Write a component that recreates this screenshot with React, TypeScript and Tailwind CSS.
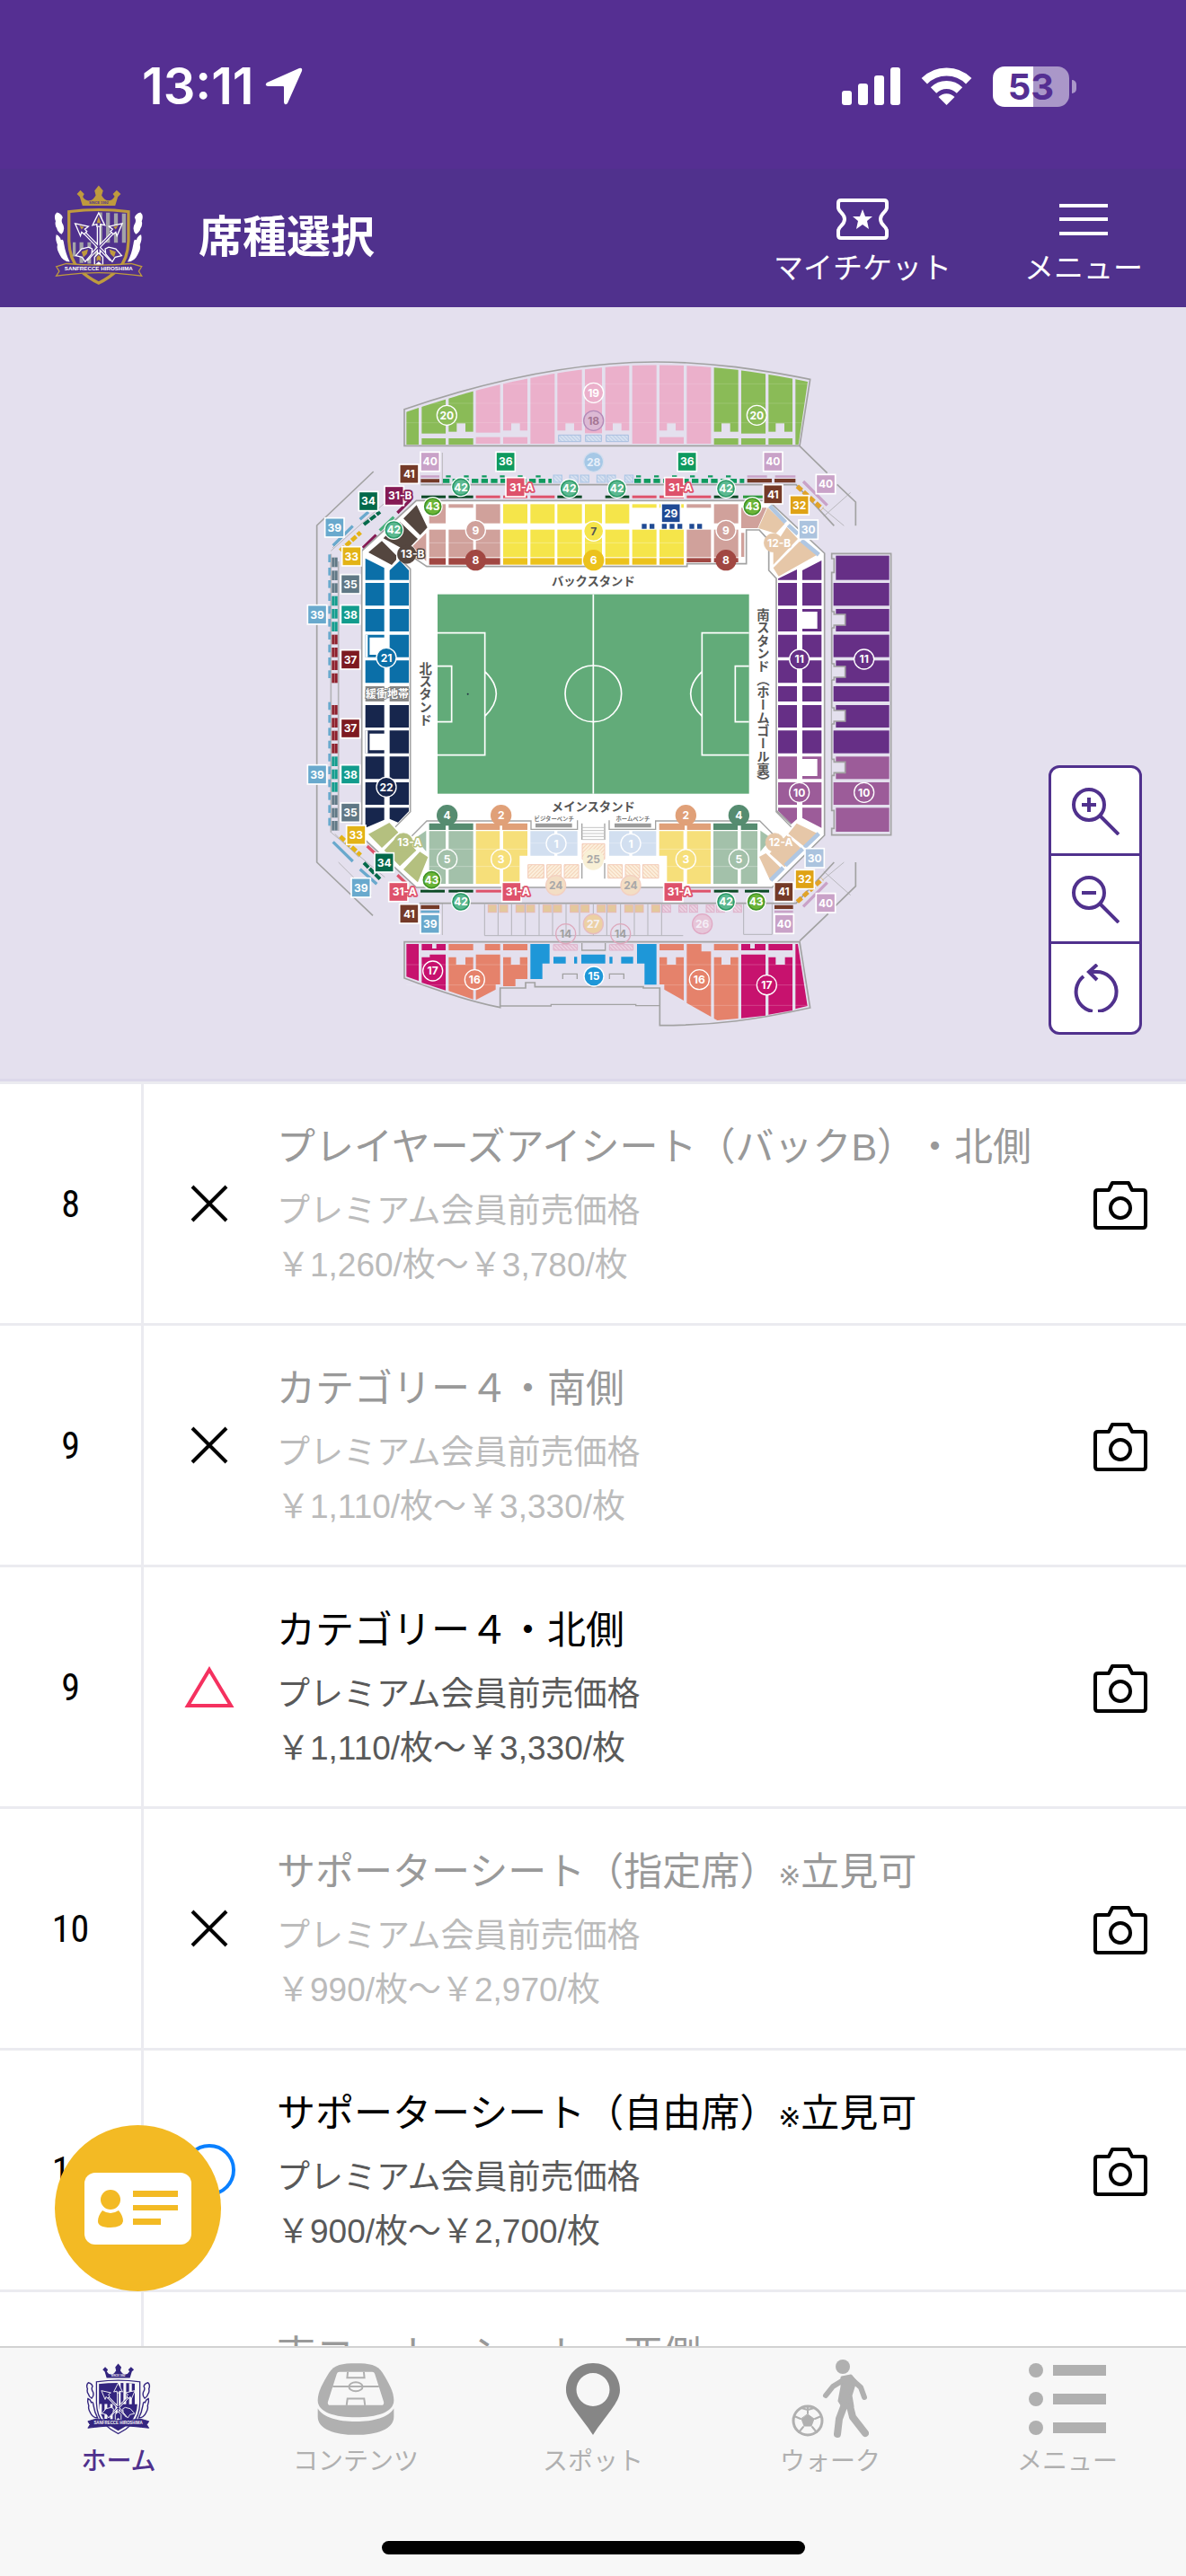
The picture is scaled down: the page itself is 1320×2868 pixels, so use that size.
import type { ReactNode } from 'react';

type Box = [x: number, y: number, w: number, h: number];

type Seat = {
  no: number;
  status: 'none' | 'few' | 'open';
  name: string;
  note?: string;
  price: string;
};

const SEATS: Seat[] = [
  { no: 8, status: 'none', name: 'プレイヤーズアイシート（バックB）・北側', price: '￥1,260/枚～￥3,780/枚' },
  { no: 9, status: 'none', name: 'カテゴリー４・南側', price: '￥1,110/枚～￥3,330/枚' },
  { no: 9, status: 'few', name: 'カテゴリー４・北側', price: '￥1,110/枚～￥3,330/枚' },
  { no: 10, status: 'none', name: 'サポーターシート（指定席）', note: '立見可', price: '￥990/枚～￥2,970/枚' },
  { no: 11, status: 'open', name: 'サポーターシート（自由席）', note: '立見可', price: '￥900/枚～￥2,700/枚' },
  { no: 12, status: 'none', name: '南コーナーシート・西側', price: '￥1,110/枚～￥3,330/枚' },
];

/* ---------- stadium map data ---------- */

const GREEN = '#8abb57';
const PINK = '#ebb0cb';
const ROSE = '#d0a19b';
const YELLOW = '#f5e54a';
const PURPLE = '#662f86';
const ORCHID = '#9c5c99';
const SALMON = '#e5826b';
const MAGENTA = '#c7126e';
const BLUE = '#1e97d8';
const GREY = '#a2a2a2';
const BG = '#e4e0ee';

// x, width, bottom, fill, lower strip top (0 = none), notch x (0 = none)
const UPPER_BACK: [number, number, number, string, number, number][] = [
  [367, 41, 346, GREEN, 0, 0],
  [418, 80, 308, GREEN, 324, 0],
  [508, 82, 302, GREEN, 324, 535],
  [599, 81, 305, PINK, 320, 0],
  [690, 81, 298, PINK, 320, 717],
  [781, 81, 342, PINK, 0, 0],
  [871, 82, 298, PINK, 0, 898],
  [963, 57, 307, PINK, 0, 0],
  [1031, 80, 298, PINK, 0, 1056],
  [1121, 81, 342, PINK, 0, 0],
  [1212, 81, 298, PINK, 320, 1237],
  [1303, 81, 342, PINK, 0, 0],
  [1394, 81, 302, GREEN, 324, 1419],
  [1485, 81, 308, GREEN, 324, 0],
  [1576, 80, 302, GREEN, 324, 1600],
  [1666, 50, 346, GREEN, 0, 0],
];

const BACK_COLS: [number, number][] = [
  [443, 55], [508, 82], [599, 81], [690, 81], [781, 81], [871, 82],
  [963, 57], [1031, 80], [1121, 81], [1212, 81], [1303, 81], [1394, 81],
];

const SIDE_ROWS: [number, number][] = [
  [807, 76], [894, 75], [980, 75], [1066, 75], [1152, 51],
  [1215, 75], [1300, 76], [1387, 75], [1473, 75],
];

const OUTER_SOUTH: Box[] = [
  [1801, 716, 178, 81], [1793, 807, 186, 76], [1801, 894, 178, 75], [1793, 980, 186, 75],
  [1801, 1066, 178, 75], [1793, 1152, 186, 51], [1801, 1215, 178, 75], [1793, 1300, 186, 76],
  [1801, 1387, 178, 75], [1793, 1473, 186, 75], [1801, 1558, 178, 80],
];

const WEST_BITS: [number, string][] = [
  [722, '#607885'], [766, '#607885'], [808, '#607885'],
  [851, '#129c8d'], [894, '#129c8d'], [937, '#129c8d'],
  [980, '#8d1f2b'], [1023, '#8d1f2b'], [1066, '#8d1f2b'], [1109, '#8d1f2b'],
  [1215, '#8d1f2b'], [1258, '#8d1f2b'], [1301, '#8d1f2b'], [1344, '#8d1f2b'],
  [1387, '#129c8d'], [1430, '#129c8d'], [1473, '#129c8d'],
  [1516, '#607885'], [1559, '#607885'], [1602, '#607885'],
];

// x, width, colour
const RING_TOP: [number, number, string][] = [
  [417, 81, '#0c4a26'], [508, 82, '#0c4a26'], [599, 81, '#de526b'], [690, 81, '#de526b'],
  [781, 81, '#de526b'], [871, 82, '#0c4a26'], [1031, 80, '#0c4a26'], [1121, 81, '#de526b'],
  [1212, 81, '#de526b'], [1303, 81, '#de526b'], [1394, 81, '#0c4a26'], [1491, 70, '#2f9a3f'],
];
const RING_BOTTOM: [number, number, string][] = [
  [414, 81, '#0c4a26'], [508, 82, '#0c4a26'], [599, 100, '#de526b'],
  [1280, 103, '#de526b'], [1394, 81, '#0c4a26'], [1497, 81, '#0c4a26'],
];

const PALE_BLUE_BOXES = [858, 912, 948, 1003, 1037, 1096];
const GOLD_BOXES = [640, 678, 733, 768, 823, 858, 914, 950, 1004, 1040, 1096, 1131, 1186];
const PINK_BOXES = [1222, 1277, 1312, 1368, 1402, 1459];
const COMPARTMENTS = [628, 673, 718, 764, 810, 855, 900, 945, 991, 1036, 1082, 1128, 1173, 1219];

const TAGS: [string, string, [number, number][]][] = [
  ['36', '#0f9a5f', [[698, 402], [1304, 402]]],
  ['40', '#c9a2c8', [[446, 402], [1591, 402], [1767, 477], [1767, 1876], [1628, 1946]]],
  ['41', '#743a28', [[376, 443], [1591, 511], [376, 1912], [1627, 1839]]],
  ['31-A', '#de526b', [[731, 487], [1261, 487], [340, 1839], [718, 1839], [1258, 1839]]],
  ['31-B', '#851a54', [[326, 516]]],
  ['34', '#04694a', [[240, 534], [293, 1741]]],
  ['39', '#69a9cd', [[127, 622], [69, 913], [69, 1447], [215, 1825], [446, 1946]]],
  ['33', '#e3b317', [[184, 718], [199, 1649]]],
  ['35', '#607885', [[180, 811], [180, 1574]]],
  ['38', '#129c8d', [[180, 913], [180, 1447]]],
  ['37', '#7d1a21', [[180, 1063], [180, 1293]]],
  ['32', '#dfa215', [[1679, 547], [1697, 1797]]],
  ['30', '#abc3de', [[1709, 629], [1730, 1726]]],
  ['29', '#1f4a94', [[1250, 574]]],
];

// label, fill, ring, text colour, centres
const ROUNDS: [string, string, string, string, [number, number][]][] = [
  ['20', GREEN, '#fff', '#fff', [[502, 247], [1537, 247]]],
  ['19', PINK, '#fff', '#fff', [[992, 172]]],
  ['18', '#dcb9d4', '#b48ab8', '#a57593', [[992, 265]]],
  ['28', '#a6c8e6', '#d5deee', '#e8f0fa', [[992, 403]]],
  ['9', ROSE, '#fff', '#fff', [[598, 631], [1434, 631]]],
  ['8', '#a14742', '#a14742', '#fff', [[598, 731], [1434, 731]]],
  ['7', YELLOW, '#fff', '#555', [[992, 634]]],
  ['6', '#ecc21c', '#ecc21c', '#fff', [[992, 731]]],
  ['21', '#0b6fa8', '#fff', '#fff', [[300, 1057]]],
  ['22', '#17264d', '#fff', '#fff', [[300, 1489]]],
  ['11', PURPLE, '#fff', '#fff', [[1679, 1062], [1895, 1062]]],
  ['10', ORCHID, '#fff', '#fff', [[1679, 1507], [1895, 1507]]],
  ['4', '#568c70', '#568c70', '#fff', [[503, 1583], [1477, 1583]]],
  ['2', '#e0a078', '#e0a078', '#fff', [[683, 1583], [1300, 1583]]],
  ['5', '#a3c1aa', '#fff', '#fff', [[503, 1730], [1477, 1730]]],
  ['3', '#f6df7a', '#fff', '#fff', [[683, 1730], [1300, 1730]]],
  ['1', '#d2dff0', '#fff', '#fff', [[867, 1678], [1116, 1678]]],
  ['25', '#f8f0d6', '#f8f0d6', '#a8a8a8', [[991, 1731]]],
  ['24', '#f3dec4', '#f3cfc0', '#a8a8a8', [[866, 1817], [1116, 1817]]],
  ['27', '#ecd0a4', '#e6bcc0', '#f4f0f4', [[991, 1946]]],
  ['26', '#e6c6d9', '#e0a9c4', '#f4eef6', [[1355, 1946]]],
  ['14', 'none', '#dda9bd', '#a0a0a0', [[899, 1979], [1082, 1979]]],
  ['15', BLUE, '#fff', '#fff', [[993, 2121]]],
  ['16', SALMON, '#fff', '#fff', [[595, 2132], [1345, 2132]]],
  ['17', MAGENTA, '#fff', '#fff', [[455, 2103], [1570, 2150]]],
  ['13-A', '#b4c07f', '#fff', '#fff', [[357, 1674]]],
  ['13-B', '#54463f', '#fff', '#fff', [[368, 711]]],
  ['12-A', '#e6c7a8', '#fff', '#fff', [[1597, 1674]]],
  ['12-B', '#e6c7a8', '#fff', '#fff', [[1592, 673]]],
];

const GATES: [string, string, string, [number, number][]][] = [
  ['42', '#5cb890', '#2a9a68', [[549, 487], [911, 492], [1070, 492], [1434, 492], [325, 630], [549, 1872], [1434, 1872]]],
  ['43', '#6cb438', '#3f9426', [[455, 552], [1522, 552], [451, 1799], [1535, 1872]]],
];

/* ---------- stadium map ---------- */

function Tag({ x, y, label, fill }: { x: number; y: number; label: string; fill: string }) {
  const wide = label.length > 2;
  return (
    <g>
      <rect x={x - 32} y={y - 32} width="64" height="64" fill={fill} stroke="#fff" strokeWidth="5" />
      <text
        x={wide ? x - 20 : x}
        y={y + 13}
        textAnchor={wide ? 'start' : 'middle'}
        fill="#fff"
        stroke={wide ? fill : 'none'}
        strokeWidth="11"
        strokeLinejoin="round"
        paintOrder="stroke"
      >
        {label}
      </text>
    </g>
  );
}

function Round({ x, y, label, fill, ring, color }: { x: number; y: number; label: string; fill: string; ring: string; color: string }) {
  const wide = label.length > 2;
  return (
    <g>
      <circle cx={x} cy={y} r={wide ? 31 : 33} fill={fill} stroke={wide ? fill : ring} strokeWidth={wide ? 2 : 4} />
      <text
        x={wide ? x - 20 : x}
        y={y + 13}
        textAnchor={wide ? 'start' : 'middle'}
        fill={color}
        stroke={wide ? fill : 'none'}
        strokeWidth="9"
        strokeLinejoin="round"
        paintOrder="stroke"
      >
        {label}
      </text>
    </g>
  );
}

function MainStandHalf() {
  return (
    <g>
      <path d="M443 1610h55v22h-55zM508 1610h82v22h-82z" fill="#568c70" />
      <path d="M443 1636h55v176h-55zM508 1636h82v176h-82zM396 1660l37-26v70z" fill="#a3c1aa" />
      <path d="M599 1610h172v22H599z" fill="#e0a078" />
      <path d="M599 1636h81v176h-81zM690 1636h81v82h-26v94h-55z" fill="#f6df7a" />
      <path d="M781 1636h80v82h-80zM871 1636h67v82h-67z" fill="#d2dff0" />
      <path d="M443 1696h147M443 1754h147M599 1696h172M599 1754h146M781 1676h157" stroke="#fff" strokeOpacity=".3" strokeWidth="3" />
      <path d="M798 1610h122v14H798z" fill="#9b9b9b" />
      <g fill="url(#hatchPeach)" stroke="#f3cbb8" strokeWidth="3">
        <path d="M773 1748h53v45h-53zM836 1748h48v45h-48zM894 1748h48v45h-48z" />
      </g>
      <path d="M330 1622l52-52M385 1652l50-50h348v28h155v-30M953 1610v55M953 1743v52" fill="none" stroke={GREY} strokeWidth="4" />
    </g>
  );
}

function Pitch() {
  return (
    <g fill="none" stroke="#fff" strokeWidth="5">
      <rect x="471" y="845" width="1040" height="666" fill="#62ab79" stroke="none" />
      <path d="M991 845v666M471 974h158v408H471M471 1085h47v186h-47M629 1103q76 74 0 149" />
      <path d="M1511 974h-157v408h157M1511 1085h-46v186h46M1354 1103q-76 74 0 149" />
      <circle cx="991" cy="1177" r="94" />
      <circle cx="572" cy="1178" r="3" fill="#234" stroke="none" />
    </g>
  );
}

function StadiumMap() {
  return (
    <svg
      viewBox="-30 33 2040 2280"
      className="h-[760px] w-[680px] [font-family:Inter,'Noto_Sans_CJK_JP',sans-serif] text-[36px] font-bold"
      role="img"
      aria-label="座席図"
    >
      <defs>
        <pattern id="hatchBlue" width="9" height="9" patternUnits="userSpaceOnUse" patternTransform="rotate(-45)">
          <rect width="9" height="9" fill="#dbe4f2" />
          <rect width="4" height="9" fill="#bccde6" />
        </pattern>
        <pattern id="hatchPeach" width="9" height="9" patternUnits="userSpaceOnUse" patternTransform="rotate(45)">
          <rect width="9" height="9" fill="#fcefdc" />
          <rect width="3" height="9" fill="#f3d3b8" />
        </pattern>
        <pattern id="hatchPink" width="9" height="9" patternUnits="userSpaceOnUse" patternTransform="rotate(-45)">
          <rect width="9" height="9" fill="#ecd9e6" />
          <rect width="4" height="9" fill="#dfb3cb" />
        </pattern>
        <clipPath id="upperBack">
          <path d="M366 346V236C603 155 900 79 1200 79C1390 79 1550 103 1707 135L1676 346Z" />
        </clipPath>
      </defs>

      {/* outer walkways */}
      <g fill="none" stroke={GREY} strokeWidth="5">
        <path d="M257 435L68 615V1740L255 1918" />
        <path d="M1680 350l92 90M1805 478l62 59v79M1680 2003l95-91M1800 1885l67-65v-80" />
        <path d="M415 479h1253l127 137M410 1877h1258l127-137" />
        <path d="M115 710v930M140 735v900" stroke="#b4b4b8" />
        <path
          d="M487 372v107M487 1877v106M1850 505l-90 80M1756 556l72 60M1850 1850l-90-80M1756 1800l72-60M120 690l62-62M128 1645l80 78M115 700l185-165M140 1740l110 110M115 1640l180 150"
          strokeWidth="2"
        />
      </g>
      {WEST_BITS.map(([y, fill]) => (
        <g key={y}>
          <rect x="118" y={y} width="19" height="32" fill={fill} />
          <rect x="106" y={y - 10} width="8" height="26" fill="#69a9cd" />
          <path d={`M127 ${y}v32`} stroke="#fff" strokeOpacity=".35" strokeWidth="3" />
        </g>
      ))}
      <g fill="none" strokeWidth="10">
        <path d="M122 682l66-65M212 595l28-25M122 1672l66 65M212 1763l56 50" stroke="#69a9cd" />
        <path d="M146 700l68-62M146 1654l68 62" stroke="#e3b317" strokeDasharray="20 6" strokeWidth="14" />
        <path d="M225 612l54-42M225 1742l54 54" stroke="#04694a" strokeDasharray="22 5" strokeWidth="12" />
        <path d="M337 573l44-44M222 690l44-43" stroke="#851a54" />
        <path d="M278 632l47-45" stroke="#48b07c" />
        <path d="M236 1686l30 28M337 1783l30 28" stroke="#de526b" />
        <path d="M1692 468l80 80M1692 1888l80-80" stroke="#c9a2c8" />
        <path d="M1672 484l84 76M1672 1872l84-76" stroke="#e0a32a" strokeDasharray="20 8" strokeWidth="15" />
        <path d="M489 466h363M1128 466h367" stroke="#0f9a5f" strokeDasharray="22 10" strokeWidth="14" />
        <path d="M499 451h353M1134 451h360" stroke="#0f9a5f" strokeDasharray="16 44" strokeWidth="7" />
      </g>
      {PALE_BLUE_BOXES.map((x) => (
        <rect key={x} x={x} y="447" width="28" height="24" fill="url(#hatchBlue)" stroke="#a9c6e6" strokeWidth="3" />
      ))}
      <path d="M415 460h62v12h-62zM1505 459h82v13h-82zM1596 459h70v13h-70zM415 1883h62v13h-62zM1596 1883h62v13h-62z" fill="#743a28" />
      <path d="M415 448h62v7h-62zM1505 448h66v7h-66zM1598 448h68v7h-68zM1596 1901h62v8h-62z" fill="#c9a2c8" />
      <path d="M415 1901h62v8h-62z" fill="#69a9cd" />

      {/* upper back stand */}
      <path d="M360 349V227C600 145 900 69 1200 69C1390 69 1550 95 1715 127L1680 349Z" fill={BG} stroke={GREY} strokeWidth="5" />
      <g clipPath="url(#upperBack)">
        {UPPER_BACK.map(([x, w, bottom, fill, strip, notch]) => (
          <g key={x}>
            <rect x={x} y="60" width={w} height={bottom - 60} fill={fill} />
            {strip > 0 && <rect x={x} y={strip} width={w} height="22" fill={fill} />}
            {notch > 0 && <rect x={notch} y="274" width="29" height="30" fill={BG} />}
          </g>
        ))}
        <path d="M360 142h1350M360 207h1350M360 272h1350" stroke="#fff" strokeOpacity=".15" strokeWidth="3" />
      </g>
      <g fill="url(#hatchBlue)" stroke="#a9bfe0" strokeWidth="3">
        <path d="M875 313h74v22h-74zM965 313h53v22h-53zM1034 313h74v22h-74z" />
      </g>

      {/* lower bowl */}
      <path
        d="M400 532H1575L1763 708V1650L1588 1824H400L218 1655V700Z"
        fill="#fff"
        stroke={GREY}
        strokeWidth="5"
      />
      <path
        d="M380 715l55 37h869v-9h198V630h43l32 35v100l25 27v775l50 46M340 722l40 38v810"
        fill="none"
        stroke={GREY}
        strokeWidth="5"
      />
      {RING_TOP.map(([x, w, fill]) => (
        <rect key={x} x={x} y="515" width={w} height="9" fill={fill} />
      ))}
      {RING_BOTTOM.map(([x, w, fill]) => (
        <rect key={x} x={x} y="1832" width={w} height="9" fill={fill} />
      ))}

      {/* back stand */}
      {BACK_COLS.map(([x, w]) => {
        const centre = x >= 690 && x < 1300;
        const short = x === 508 || (x > 1120 && x < 1390);
        return (
          <g key={x}>
            <rect x={x} y="544" width={w} height={short ? 12 : 64} fill={centre ? YELLOW : ROSE} />
            <rect x={x} y="629" width={w} height="92" fill={centre ? YELLOW : ROSE} />
            <rect x={x} y="724" width={w} height={x > 1300 ? 14 : 22} fill={centre ? '#ecc21c' : '#a14742'} />
          </g>
        );
      })}
      <path d="M1485 556h85l-30 68h-55zM1485 640h10v80h-10zM388 684l45-44v95z" fill={ROSE} />
      <path d="M443 673h850" stroke="#fff" strokeOpacity=".3" strokeWidth="3" />
      <path d="M1153 618h44M1220 618h68M1312 618h42" stroke="#1f4a94" strokeWidth="17" strokeDasharray="16 10" />

      {/* corners */}
      <path d="M401 547l36 75-24 25-56-55zM345 603l60 57-38 40-77-42zM285 667l48 48v15l-15 17-78-42z" fill="#54463f" />
      <path d="M310 1608l30 32-55 52-45-46zM345 1645l55 55-55 53-52-53zM412 1705l27 18-34 84-48-43z" fill="#b4c07f" />
      <path d="M1573 555l57 55-30 32-58-18zM1637 620l37 40-82 86V690zM1680 668l58 45-128 72-18-28z" fill="#e6c7a8" />
      <path d="M1670 1610l68 33-42 45-54-43zM1636 1650l54 48-60 58-50-45zM1567 1710l53 52-38 40-37-80z" fill="#e6c7a8" />
      <path
        d="M1580 550l53 55M1642 614l32 30M1686 665l58 48M1744 1644l-48 46M1690 1695l-58 56M1625 1758l-42 42"
        stroke="#b0c7e2"
        strokeWidth="14"
      />

      {/* north and south stands */}
      {SIDE_ROWS.map(([y, h]) => {
        const north = y === 1152 ? '#8a8a8a' : y < 1152 ? '#0b6fa8' : '#17264d';
        const south = y < 1380 ? PURPLE : ORCHID;
        return (
          <g key={y}>
            <path d={`M230 ${y}h63v${h}h-63zM311 ${y}h64v${h}h-64z`} fill={north} />
            <path d={`M1608 ${y}h63v${h}h-63zM1689 ${y}h64v${h}h-64z`} fill={south} />
          </g>
        );
      })}
      <path d="M230 725l63 32v40h-63zM311 765l34-32 30 32v32h-64z" fill="#0b6fa8" />
      <path d="M230 1558h63v40l-58 25-5-4zM311 1558h64v12l-36 37-28-12z" fill="#17264d" />
      <path d="M1608 797v-4l63-31v35zM1689 797v-32l64-33v65z" fill={PURPLE} />
      <path d="M1608 1558h63v38l-18 16-45-44zM1689 1558h64v67l-64-33z" fill={ORCHID} />
      <path d="M230 980h8v75h-8zM244 989h50v58h-50zM230 1300h8v76h-8zM244 1310h50v56h-50zM1689 903h50v57h-50zM1689 1395h50v57h-50z" fill="#fff" />

      <path d="M1787 709h198v940h-198v-22h8v-60h-8V772h8v-46h-8z" fill={BG} stroke={GREY} strokeWidth="5" />
      {OUTER_SOUTH.map(([x, y, w, h]) => (
        <rect key={y} x={x} y={y} width={w} height={h} fill={y < 1380 ? PURPLE : ORCHID} />
      ))}
      {[930, 1104, 1251, 1423].map((y) => (
        <path key={y} d={`M1787 ${y - 27}h8v9h37v36h-37v9h-8`} fill={BG} stroke={GREY} strokeWidth="5" />
      ))}

      {/* main stand */}
      <MainStandHalf />
      <g transform="matrix(-1 0 0 1 1982 0)">
        <MainStandHalf />
      </g>
      <path d="M953 1624h77M953 1634h77M953 1644h77M953 1654h77M953 1664h77" stroke="#c4c4c4" strokeWidth="3" />
      <path d="M954 1678h75v52h-75z" fill="url(#hatchPeach)" stroke="#f3cbb8" strokeWidth="3" />

      <Pitch />

      {/* concourse under the main stand */}
      <g fill="none" stroke="#b4b4ba" strokeWidth="3">
        {COMPARTMENTS.map((x) => (
          <path key={x} d={`M${x} 1877v108`} />
        ))}
        <path d="M628 1985h663M1493 1877v104h95v-104" />
      </g>
      {GOLD_BOXES.map((x) => (
        <rect key={x} x={x} y="1883" width="27" height="24" fill="#e3c89c" stroke="#e8b9b0" strokeWidth="3" />
      ))}
      {PINK_BOXES.map((x) => (
        <rect key={x} x={x} y="1883" width="27" height="24" fill="url(#hatchPink)" stroke="#dfb3cb" strokeWidth="3" />
      ))}

      {/* upper main stand */}
      <path
        d="M360 2006H1680L1715 2226C1540 2265 1400 2285 1213 2285V2160H1158V2156H796V2142H765V2160H680V2225C560 2200 460 2165 360 2127Z"
        fill={BG}
        stroke={GREY}
        strokeWidth="5"
      />
      <path d="M680 2220h170v-5h283v4h80M953 2010v24h78v-24M889 2130v-17h48v17M1045 2130v-17h48v17" fill="none" stroke={GREY} strokeWidth="4" />
      <path
        d="M367 2013h41v123l-41-14zM418 2013h35v15h14v-15h31v21h-80zM445 2048h53v120l-80-26v-85h27zM1485 2013h30v15h15v-15h36v21h-81zM1576 2013h80v21h-80zM1485 2048h81v204l-81 9zM1576 2057h24v25h31v-25h25v178l-80 14zM1666 2013h8l32 207-40 10z"
        fill={MAGENTA}
      />
      <path
        d="M508 2013h82v21h-82zM629 2013h51v21h-51zM690 2013h81v21h-81zM508 2057h25v25h31v-25h26v141l-82-28zM599 2048h81v100h-15v17l-66 35zM690 2057h26v25h30v-25h25v73h-40v24h-41zM1212 2013h81v21h-81zM1303 2013h49v25h32v218l-81-46zM1394 2013h81v21h-81zM1212 2057h25v25h30v-25h26v145l-65-37v-17h-16zM1394 2057h25v25h30v-25h26v205l-70 6-11-6z"
        fill={SALMON}
      />
      <path
        d="M781 2013h64v65h-24v52h-40zM858 2056h41v22h-41zM927 2056h10v22h-10zM951 2048h80v30h-80zM1045 2056h10v22h-10zM1084 2056h40v22h-40zM1137 2013h65v136h-40v-71h-25z"
        fill={BLUE}
      />
      <path d="M367 2082h404M367 2150h313M1212 2082h480M1212 2150h490M1303 2218h400" stroke="#fff" strokeOpacity=".2" strokeWidth="3" />
      <path d="M858 2015h80v19h-80zM1045 2015h79v19h-79z" fill="url(#hatchPink)" stroke="#dfb3cb" strokeWidth="3" />

      {/* stand names */}
      <g fill="#555" textAnchor="middle" className="text-[40px]">
        <text x="991" y="815">バックスタンド</text>
        <text x="991" y="1570">メインスタンド</text>
      </g>
      <g fill="#555" className="text-[43px] [writing-mode:vertical-rl]">
        <text x="428" y="1071">北スタンド</text>
        <text x="1555" y="892">南スタンド（ホームゴール裏）</text>
      </g>
      <g fill="#777" textAnchor="middle" className="text-[19px]">
        <text x="860" y="1602">ビジターベンチ</text>
        <text x="1123" y="1602">ホームベンチ</text>
      </g>
      <text x="303" y="1190" textAnchor="middle" fill="#fff" stroke="#777" strokeWidth="5" paintOrder="stroke">
        緩衝地帯
      </text>

      {/* link bars between paired blocks */}
      <path d="M503 1610v202M683 1610v202M1300 1610v202M1477 1610v202" stroke="#fff" strokeWidth="8" />

      {ROUNDS.map(([label, fill, ring, color, points]) =>
        points.map(([x, y]) => <Round key={`${label}-${x}`} x={x} y={y} label={label} fill={fill} ring={ring} color={color} />),
      )}
      {TAGS.map(([label, fill, points]) =>
        points.map(([x, y]) => <Tag key={`${label}-${x}-${y}`} x={x} y={y} label={label} fill={fill} />),
      )}
      {GATES.map(([label, fill, ring, points]) =>
        points.map(([x, y]) => (
          <g key={`${label}-${x}-${y}`}>
            <circle cx={x} cy={y} r="33" fill="#fff" />
            <circle cx={x} cy={y} r="27" fill={fill} stroke={ring} strokeWidth="5" />
            <text x={x} y={y + 13} textAnchor="middle" fill="#fff">
              {label}
            </text>
          </g>
        )),
      )}
    </svg>
  );
}

/* ---------- icons ---------- */

type CrestColors = {
  frame: string;
  field: string;
  edge: string;
  line: string;
  stripe: string;
  wing: string;
  wingEdge: string;
  ink: string;
};

function Crest({ colors, className }: { colors: CrestColors; className: string }) {
  const { frame, field, edge, line, stripe, wing, wingEdge, ink } = colors;
  return (
    <svg viewBox="58 46 308 340" className={className} aria-hidden="true">
      <path
        d="M155 115L146 86L136 76L148 63L161 76L156 85Q165 100 178 98Q190 98 200 80L196 64L210 47L225 64L220 80Q230 98 244 98Q256 98 264 84L258 76L271 63L285 76L275 86L266 115Z"
        fill={frame}
      />
      <text x="210" y="110" textAnchor="middle" fill={ink} className="text-[12px] font-bold">
        SINCE 1992
      </text>
      <path d="M104 131Q210 118 316 131V235Q314 300 280 335Q250 365 210 384Q170 365 140 335Q106 300 104 235Z" fill={frame} />
      <path
        d="M114 140Q210 128 306 140V235Q304 296 272 328Q245 355 210 372Q175 355 148 328Q116 296 114 235Z"
        fill={field}
        stroke={edge}
        strokeWidth="9"
      />
      <path d="M212 138h10v102h-10zM235 139h13v102h-13zM262 141h13v100h-13zM289 142h13v99h-13z" fill={stripe} />
      <path d="M122 240h10v48h-10zM145 240h13v70h-13zM172 240h12v72h-12zM197 240h10v80h-10z" fill={stripe} />
      <g stroke={line} strokeWidth="4" fill={field}>
        <path d="M143 188L252 300M277 188L168 300" strokeWidth="11" />
        <path d="M210 170v150" strokeWidth="13" />
        <path d="M210 170v140" stroke={field} strokeWidth="5" />
        <path d="M150 195L250 298M270 195L170 298" stroke={field} strokeWidth="4" />
        <path d="M210 140L231 182L216 178V186H204V178L189 182Z" />
        <path d="M130 176L175 186L163 195L170 203L160 212L152 205L148 218Z" />
        <path d="M290 176L245 186L257 195L250 203L260 212L268 205L272 218Z" />
        <path d="M132 285L152 262L176 256L188 262L186 280L164 306L154 290Z" />
        <path d="M288 285L268 262L244 256L232 262L234 280L256 306L266 290Z" />
        <path d="M196 290L210 276L224 290V320L210 308L196 320Z" />
      </g>
      <path
        d="M210 152l7 22h-14zM144 182l16 6-8 8zM276 182l-16 6 8 8zM152 272l22-9-4 16-12 12zM268 272l-22-9 4 16 12 12zM203 290l7-7 7 7v14l-7-5-7 5z"
        fill={frame}
      />
      <g fill={wing} stroke={wingEdge} strokeWidth="6">
        <path d="M68 138Q85 142 88 156Q80 168 90 182Q96 200 84 212Q70 204 68 192Q60 180 64 168Q56 148 68 138Z" />
        <path d="M66 214Q78 218 82 232Q90 226 92 244Q98 280 112 306Q88 304 78 282Q66 262 70 248Q62 230 66 214Z" />
        <path d="M352 138Q335 142 332 156Q340 168 330 182Q324 200 336 212Q350 204 352 192Q360 180 356 168Q364 148 352 138Z" />
        <path d="M354 214Q342 218 338 232Q330 226 328 244Q322 280 308 306Q332 304 342 282Q354 262 350 248Q358 230 354 214Z" />
      </g>
      <path d="M66 322L100 312Q210 322 320 312L356 322L346 338L356 354L320 350Q210 336 100 350L66 354L76 338Z" fill={field} stroke={frame} strokeWidth="4" />
      <text x="210" y="336" textAnchor="middle" fill={line} className="text-[19px] font-bold">
        SANFRECCE HIROSHIMA
      </text>
    </svg>
  );
}

const HEADER_CREST: CrestColors = {
  frame: '#bf9a3e', field: '#50318d', edge: 'none', line: '#fff', stripe: '#a3a3a8', wing: '#fff', wingEdge: 'none', ink: '#50318d',
};
const TAB_CREST: CrestColors = {
  frame: '#33257f', field: '#33257f', edge: '#f7f7f7', line: '#f7f7f7', stripe: '#f7f7f7', wing: '#f7f7f7', wingEdge: '#33257f', ink: '#f7f7f7',
};

function TicketIcon() {
  return (
    <svg viewBox="0 0 58 46" className="h-[46px] w-[58px]" fill="none" stroke="currentColor" strokeWidth="4" aria-hidden="true">
      <path d="M5 2H53Q56 2 56 5V10C56 15 49 16 49 23C49 30 56 31 56 36V41Q56 44 53 44H5Q2 44 2 41V36C2 31 9 30 9 23C9 16 2 15 2 10V5Q2 2 5 2Z" />
      <path d="M29 12l3 8h8l-6 5 2 9-7-5-7 5 2-9-6-5h8z" fill="currentColor" stroke="none" />
    </svg>
  );
}

function StatusMark({ status }: { status: Seat['status'] }) {
  if (status === 'few') {
    return (
      <svg viewBox="0 0 58 58" className="size-[58px]" fill="none" stroke="#f5315f" strokeWidth="4" role="img" aria-label="残りわずか">
        <path d="M29 10L53 50H5Z" />
      </svg>
    );
  }
  if (status === 'open') {
    return (
      <svg viewBox="0 0 58 58" className="size-[58px]" fill="none" stroke="#0a80ff" strokeWidth="4" role="img" aria-label="空席あり">
        <circle cx="29" cy="29" r="27" />
      </svg>
    );
  }
  return (
    <svg viewBox="0 0 58 58" className="size-[58px]" fill="none" stroke="#000" strokeWidth="4" role="img" aria-label="空席なし">
      <path d="M10 10L48 48M48 10L10 48" />
    </svg>
  );
}

function CameraIcon() {
  return (
    <svg viewBox="0 0 60 54" className="h-[54px] w-[60px]" fill="none" stroke="#000" strokeWidth="4" strokeLinejoin="round" aria-hidden="true">
      <path d="M5 10H17L21 2H39L43 10H55Q58 10 58 13V49Q58 52 55 52H5Q2 52 2 49V13Q2 10 5 10Z" />
      <circle cx="30" cy="30" r="11" />
    </svg>
  );
}

function ZoomIcon({ children }: { children: ReactNode }) {
  return (
    <svg viewBox="0 0 54 54" className="size-[54px]" fill="none" stroke="currentColor" strokeWidth="4" aria-hidden="true">
      {children}
    </svg>
  );
}

function StadiumIcon() {
  return (
    <svg viewBox="0 0 260 241" className="h-20 w-[86px]" aria-hidden="true">
      <path
        d="M130 0C175 0 203 4 220 32C240 65 258 95 258 125C258 165 200 182 130 182C60 182 2 165 2 125C2 95 20 65 40 32C57 4 85 0 130 0Z"
        fill="#b0b0b0"
      />
      <path d="M2 152C20 182 70 196 130 196C190 196 240 182 258 152V180C258 222 200 241 130 241C60 241 2 222 2 180Z" fill="#b0b0b0" />
      <path d="M75 29H185Q192 29 194 36L224 130Q226 141 216 141H44Q34 141 36 130L66 36Q68 29 75 29Z" fill="#f7f7f7" />
      <g fill="none" stroke="#b0b0b0" strokeWidth="6">
        <path d="M52 78H208M103 29L101 49H159L157 29M99 141L102 119H158L161 141" />
        <ellipse cx="130" cy="79" rx="23" ry="15" />
      </g>
    </svg>
  );
}

function PinIcon() {
  return (
    <svg viewBox="0 0 60 80" className="h-20 w-[60px]" aria-hidden="true">
      <path
        d="M30 0C13 0 0 13 0 30C0 44 16 58 30 80C44 58 60 44 60 30C60 13 47 0 30 0ZM30 11A18 18 0 1 1 30 48A18 18 0 1 1 30 11Z"
        fill="#868686"
        fillRule="evenodd"
      />
    </svg>
  );
}

function WalkIcon() {
  return (
    <svg viewBox="0 0 86 88" className="h-[88px] w-[86px]" fill="none" stroke="#b0b0b0" strokeLinecap="round" strokeLinejoin="round" aria-hidden="true">
      <circle cx="57" cy="8" r="8" fill="#b0b0b0" stroke="none" />
      <path d="M56 20L66 18L71 24L66 40L68 52L58 54L53 46L56 30Z" fill="#b0b0b0" strokeWidth="3" />
      <path d="M59 22L46 30L38 40M68 23L77 31L81 42" strokeWidth="6" />
      <path d="M59 50L53 66L51 83M65 52L68 64L82 82" strokeWidth="8" />
      <circle cx="18" cy="68" r="16" strokeWidth="3" />
      <path d="M18 61l7 5-3 8H14l-3-8z" fill="#b0b0b0" strokeWidth="1" />
      <path d="M18 60v-7M26 66l7-3M23 75l5 6M13 75l-5 6M10 66l-7-3M11 54l7 2 7-2" strokeWidth="2" />
    </svg>
  );
}

function ListIcon() {
  return (
    <svg viewBox="0 0 86 80" className="h-20 w-[86px]" fill="#b0b0b0" aria-hidden="true">
      {[8, 40, 72].map((y) => (
        <g key={y}>
          <circle cx="8" cy={y} r="8" />
          <rect x="27" y={y - 6} width="59" height="12" />
        </g>
      ))}
    </svg>
  );
}

const TABS: { label: string; icon: ReactNode; active?: boolean }[] = [
  { label: 'ホーム', icon: <Crest colors={TAB_CREST} className="h-20 w-[72px]" />, active: true },
  { label: 'コンテンツ', icon: <StadiumIcon /> },
  { label: 'スポット', icon: <PinIcon /> },
  { label: 'ウォーク', icon: <WalkIcon /> },
  { label: 'メニュー', icon: <ListIcon /> },
];

/* ---------- page parts ---------- */

function StatusBar() {
  return (
    <div className="flex h-[188px] items-start justify-between bg-[#552f92] pt-[66px] pr-[122px] pl-[158px] text-white">
      <div className="flex h-[60px] items-center gap-3">
        <span className="[font-family:Inter,sans-serif] text-[56px] leading-[60px] font-semibold">13:11</span>
        <svg viewBox="0 0 42 42" className="size-[42px]" fill="currentColor" aria-hidden="true">
          <path d="M38 1Q42 0 41 4L25 40Q22 43 21 39V22Q21 21 20 21H3Q-1 20 2 17Z" />
        </svg>
      </div>
      <div className="flex h-[60px] items-center gap-[23px]">
        <svg viewBox="0 0 65 42" className="h-[42px] w-[65px]" fill="currentColor" aria-hidden="true">
          <rect x="0" y="26" width="11" height="16" rx="3" />
          <rect x="18" y="18" width="11" height="24" rx="3" />
          <rect x="36" y="9" width="11" height="33" rx="3" />
          <rect x="54" y="0" width="11" height="42" rx="3" />
        </svg>
        <svg viewBox="0 0 57 42" className="h-[42px] w-[57px]" fill="none" stroke="currentColor" strokeWidth="9" aria-hidden="true">
          <path d="M3.8 15.3A35 35 0 0 1 53.2 15.3M14 25.5A20.5 20.5 0 0 1 43 25.5" />
          <path d="M28.5 42L19.5 33A12.5 12.5 0 0 1 37.5 33Z" fill="currentColor" stroke="none" />
        </svg>
        <div className="flex items-center gap-[3px]">
          <span className="flex h-[45px] w-[85px] items-center justify-center rounded-[13px] bg-linear-to-r from-white from-53% to-white/50 to-53% [font-family:Inter,sans-serif] text-[40px] leading-[45px] font-bold text-[#552f92]">
            53
          </span>
          <span className="h-[15px] w-[5px] rounded-r-full bg-white/50" />
        </div>
      </div>
    </div>
  );
}

function Header() {
  return (
    <header className="flex h-[154px] items-start bg-[#50318d] pt-[18px] pr-12 pl-[60px] text-white">
      <Crest colors={HEADER_CREST} className="h-[112px] w-[101px]" />
      <h1 className="ml-[60px] flex-1 text-[49px] leading-[116px] font-bold">席種選択</h1>
      <nav className="flex gap-[81px] pt-[15px] text-[33px] leading-10">
        <a href="#ticket" className="flex flex-col items-center gap-3">
          <TicketIcon />
          マイチケット
        </a>
        <button type="button" className="flex flex-col items-center gap-3">
          <svg viewBox="0 0 54 46" className="h-[46px] w-[54px]" stroke="currentColor" strokeWidth="4" aria-hidden="true">
            <path d="M0 8H54M0 23H54M0 39H54" />
          </svg>
          メニュー
        </button>
      </nav>
    </header>
  );
}

function MapControls() {
  return (
    <div className="absolute right-[49px] bottom-[49px] flex w-[104px] flex-col divide-y-3 divide-[#50318d] overflow-hidden rounded-xl border-3 border-[#50318d] bg-white text-[#50318d]">
      <button type="button" aria-label="拡大" className="flex h-[98px] items-center justify-center">
        <ZoomIcon>
          <circle cx="20" cy="20" r="17" />
          <path d="M32 32L53 53M12 20H28M20 12V28" />
        </ZoomIcon>
      </button>
      <button type="button" aria-label="縮小" className="flex h-[98px] items-center justify-center">
        <ZoomIcon>
          <circle cx="20" cy="20" r="17" />
          <path d="M32 32L53 53M12 20H28" />
        </ZoomIcon>
      </button>
      <button type="button" aria-label="元に戻す" className="flex h-[98px] items-center justify-center">
        <ZoomIcon>
          <path d="M24 53A22 22 0 0 1 14 14M30 53A22 22 0 0 0 27 9H20M29 1L20 9L29 18" />
        </ZoomIcon>
      </button>
    </div>
  );
}

function SeatRow({ seat }: { seat: Seat }) {
  const soldOut = seat.status === 'none';
  return (
    <li className="flex h-[269px] border-t-3 border-[#ebebf0] bg-white">
      <div className="flex w-[160px] shrink-0 items-center justify-center border-r-3 border-[#ebebf0] [font-family:'Liberation_Sans_Narrow','Roboto_Condensed',Roboto,sans-serif] text-[42px]">
        {seat.no}
      </div>
      <div className="flex w-[146px] shrink-0 items-center justify-center">
        <StatusMark status={seat.status} />
      </div>
      <div className="flex-1 pt-[38px] pl-0.5">
        <h2 className={`mb-2.5 text-[43px] leading-16 ${soldOut ? 'text-[#999]' : 'text-black'}`}>
          {seat.name}
          {seat.note && (
            <>
              <span className="text-3xl">※</span>
              {seat.note}
            </>
          )}
        </h2>
        <p className={`text-[37px] leading-15 ${soldOut ? 'text-[#bbb]' : 'text-[#595959]'}`}>プレミアム会員前売価格</p>
        <p className={`text-[37px] leading-15 ${soldOut ? 'text-[#bbb]' : 'text-[#595959]'}`}>{seat.price}</p>
      </div>
      <button type="button" aria-label="座席からの眺め" className="mr-[43px] shrink-0 pt-1">
        <CameraIcon />
      </button>
    </li>
  );
}

function TabBar() {
  return (
    <nav className="h-64 shrink-0 border-t-2 border-[#d2d2d2] bg-[#f7f7f7]">
      <div className="grid grid-cols-5 pt-[13px]">
        {TABS.map((tab) => (
          <a
            key={tab.label}
            href={`#${tab.label}`}
            className={`flex flex-col items-center text-[28px] leading-9 ${tab.active ? 'font-medium text-[#50318d]' : 'text-[#b0b0b0]'}`}
          >
            <span className="flex h-[88px] items-center">{tab.icon}</span>
            <span className="mt-2">{tab.label}</span>
          </a>
        ))}
      </div>
      <div className="mx-auto mt-[70px] h-[15px] w-[471px] rounded-full bg-black" />
    </nav>
  );
}

function MemberCardButton() {
  return (
    <button
      type="button"
      aria-label="会員証"
      className="absolute bottom-[61px] left-[61px] flex size-[185px] items-center justify-center rounded-full bg-[#f3ba24]"
    >
      <svg viewBox="0 0 119 80" className="h-20 w-[119px]" fill="#f3ba24" aria-hidden="true">
        <rect width="119" height="80" rx="12" fill="#fff" />
        <circle cx="29" cy="30" r="11" />
        <path d="M20 42Q29 48 38 42Q43 48 43 54Q42 61 29 61Q15 61 15 54Q15 48 20 42Z" />
        <path d="M54 20H104V27H54ZM54 36H104V42H54ZM54 51H85V58H54Z" />
      </svg>
    </button>
  );
}

export default function App() {
  return (
    <div className="flex h-screen flex-col overflow-hidden bg-white [font-family:'Liberation_Sans','DejaVu_Sans','Noto_Sans_CJK_JP',sans-serif] text-black [text-spacing-trim:space-all]">
      <StatusBar />
      <Header />
      <section className="relative flex h-[862px] shrink-0 items-start justify-center border-b-3 border-[#dcd8ea] bg-[#e4e0ee] pt-[49px]">
        <StadiumMap />
        <MapControls />
      </section>
      <main className="relative min-h-0 flex-1">
        <ul className="h-full overflow-hidden">
          {SEATS.map((seat, index) => (
            <SeatRow key={index} seat={seat} />
          ))}
        </ul>
        <MemberCardButton />
      </main>
      <TabBar />
    </div>
  );
}
